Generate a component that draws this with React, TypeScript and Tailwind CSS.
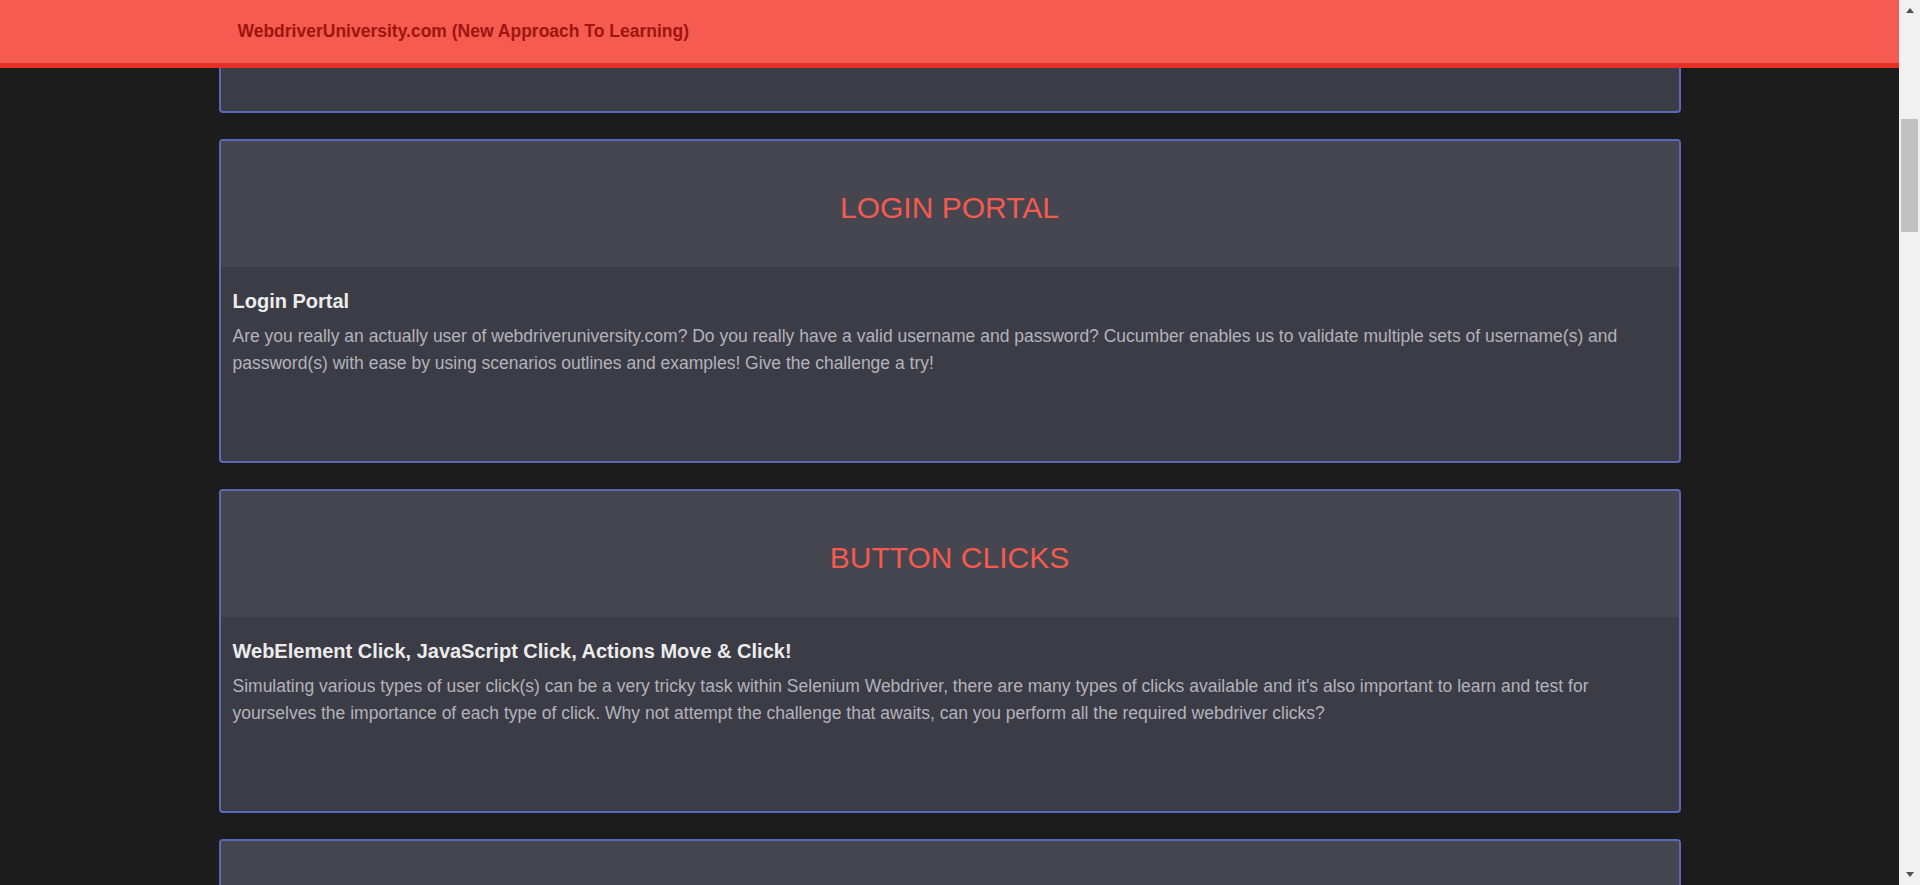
type Card = {
  title: string
  heading: string
  text: string
}

const cards: Card[] = [
  {
    title: 'CONTACT US',
    heading: 'Contact Us Form Test',
    text: 'Are you up for the challenge? Test the contact us form and ensure that the validation works as expected.',
  },
  {
    title: 'LOGIN PORTAL',
    heading: 'Login Portal',
    text: 'Are you really an actually user of webdriveruniversity.com? Do you really have a valid username and password? Cucumber enables us to validate multiple sets of username(s) and password(s) with ease by using scenarios outlines and examples! Give the challenge a try!',
  },
  {
    title: 'BUTTON CLICKS',
    heading: 'WebElement Click, JavaScript Click, Actions Move & Click!',
    text: "Simulating various types of user click(s) can be a very tricky task within Selenium Webdriver, there are many types of clicks available and it's also important to learn and test for yourselves the importance of each type of click. Why not attempt the challenge that awaits, can you perform all the required webdriver clicks?",
  },
  {
    title: 'TO DO LIST',
    heading: 'To Do List',
    text: 'Add, remove and complete items within a to do list.',
  },
]

function PanelCard({ title, heading, text }: Card) {
  return (
    <div className="flex h-[324px] w-[1462px] shrink-0 flex-col overflow-hidden rounded-[4px] border-2 border-[#5a68b8] bg-[#3c3c46]">
      <div className="flex h-[126px] shrink-0 items-center justify-center bg-[#464650] pt-[7px]">
        <h2 className="text-[30px] font-normal text-[#f55a4e]">{title}</h2>
      </div>
      <div className="px-[12px] pt-[22px]">
        <h5 className="text-[20px] font-bold leading-[24px] text-[#ececec]">{heading}</h5>
        <p className="mt-[10px] text-[17.5px] leading-[27px] text-[#b3b3bb]">{text}</p>
      </div>
    </div>
  )
}

function Scrollbar() {
  return (
    <div className="flex h-[885px] w-[21px] shrink-0 flex-col bg-[#f1f1f1]">
      <div className="flex h-[21px] items-center justify-center">
        <span className="h-0 w-0 border-x-[4px] border-b-[5px] border-x-transparent border-b-[#505050]" />
      </div>
      <div className="flex-1 px-[2px] pt-[98px]">
        <div className="h-[113px] w-full bg-[#c1c1c1]" />
      </div>
      <div className="flex h-[21px] items-center justify-center">
        <span className="h-0 w-0 border-x-[4px] border-t-[5px] border-x-transparent border-t-[#505050]" />
      </div>
    </div>
  )
}

export default function App() {
  return (
    <div className="flex h-[885px] w-full overflow-hidden bg-[#1c1c1c] font-['Liberation_Sans',Arial,sans-serif]">
      <div className="relative flex-1 overflow-hidden">
        <div className="mt-[-211px] flex flex-col items-center gap-[26px]">
          {cards.map((c) => (
            <PanelCard key={c.title} {...c} />
          ))}
        </div>
        <nav className="absolute inset-x-0 top-0 h-[68px] border-b-[5px] border-[#e52e24] bg-[#f55b51]">
          <div className="mx-auto flex h-[63px] w-[1462px] items-center px-[19px]">
            <span className="text-[17.5px] font-bold text-[#a1140d]">WebdriverUniversity.com (New Approach To Learning)</span>
          </div>
        </nav>
      </div>
      <Scrollbar />
    </div>
  )
}
